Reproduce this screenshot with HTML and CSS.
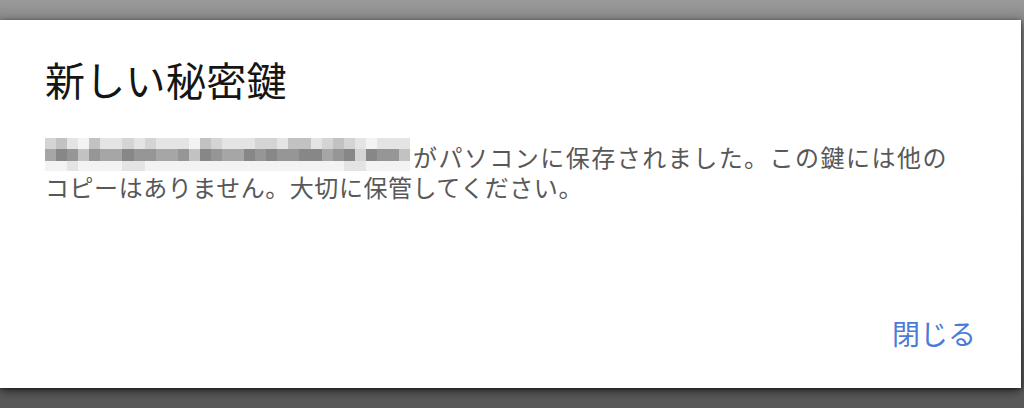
FILE: index.html
```html
<!DOCTYPE html>
<html lang="ja">
<head>
<meta charset="utf-8">
<title>新しい秘密鍵</title>
<link rel="stylesheet" href="styles.css">
</head>
<body>
<div class="dialog">
  <h1 class="title">新しい秘密鍵</h1>
  <p class="message"><span class="redacted" aria-label="(非表示)"><span class="row r1"><i class="g3"></i><i class="g4"></i><i class="g2"></i><i class="g1"></i><i class="g4"></i><i class="g2"></i><i class="g2"></i><i class="g3"></i><i class="g2"></i><i class="g3"></i><i class="g2"></i><i class="g2"></i><i class="g2"></i><i class="g1"></i><i class="g4"></i><i class="g3"></i><i class="g2"></i><i class="g2"></i><i class="g2"></i><i class="g3"></i><i class="g3"></i><i class="g2"></i><i class="g4"></i><i class="g4"></i><i class="g2"></i><i class="g3"></i><i class="g4"></i><i class="g3"></i><i class="g2"></i><i class="g1"></i><i class="g2"></i><i class="g2"></i><i class="g2"></i></span><span class="row r2"><i class="g5"></i><i class="g7"></i><i class="g6"></i><i class="g4"></i><i class="g6"></i><i class="g5"></i><i class="g5"></i><i class="g7"></i><i class="g6"></i><i class="g6"></i><i class="g5"></i><i class="g5"></i><i class="g6"></i><i class="g4"></i><i class="g7"></i><i class="g6"></i><i class="g5"></i><i class="g5"></i><i class="g7"></i><i class="g6"></i><i class="g7"></i><i class="g6"></i><i class="g6"></i><i class="g7"></i><i class="g7"></i><i class="g5"></i><i class="g6"></i><i class="g7"></i><i class="g3"></i><i class="g7"></i><i class="g6"></i><i class="g6"></i><i class="g4"></i></span><span class="row r3"><i class="g1"></i><i class="g1"></i><i class="g2"></i><i class="g1"></i><i class="g1"></i><i class="g1"></i><i class="g1"></i><i class="g2"></i><i class="g2"></i><i class="g1"></i><i class="g1"></i><i class="g1"></i><i class="g1"></i><i class="g1"></i><i class="g1"></i><i class="g1"></i><i class="g1"></i><i class="g1"></i><i class="g1"></i><i class="g1"></i><i class="g1"></i><i class="g1"></i><i class="g1"></i><i class="g1"></i><i class="g1"></i><i class="g1"></i><i class="g1"></i><i class="g2"></i><i class="g2"></i><i class="g1"></i><i class="g1"></i><i class="g1"></i><i class="g1"></i></span></span>がパソコンに保存されました。この鍵には他の<span class="nowrap">コピーはありません。</span>大切に保管してください。</p>
  <div class="actions">
    <button class="btn" type="button">閉じる</button>
  </div>
</div>
</body>
</html>
```

FILE: styles.css
```css
html, body {
  margin: 0;
  padding: 0;
}
body {
  width: 1024px;
  height: 408px;
  overflow: hidden;
  background: linear-gradient(#9a9a9a 0px, #8a8a8a 20px, #6a6a6a 300px, #585858 408px);
  font-family: "Noto Sans CJK JP", "Noto Sans", sans-serif;
}
.dialog {
  box-sizing: border-box;
  margin-top: 20px;
  width: 1021px;
  height: 368px;
  background: #fff;
  box-shadow: 0 3px 10px rgba(0, 0, 0, 0.6), 0 1px 3px rgba(0, 0, 0, 0.45);
  display: flex;
  flex-direction: column;
  padding: 35px 45px 37px 45px;
}
.title {
  margin: 0;
  font-size: 40px;
  line-height: 48px;
  font-weight: 400;
  letter-spacing: 0.3px;
  color: #151515;
}
.message {
  margin: 39px 0 0 0;
  width: 902px;
  font-size: 24px;
  line-height: 30px;
  letter-spacing: 0.55px;
  color: #585858;
  text-align: justify;
}
.nowrap {
  white-space: nowrap;
}
.redacted {
  display: inline-block;
  width: 365px;
  height: 33px;
  margin: -4px 2px -4px 0;
  vertical-align: -4px;
}
.row {
  display: flex;
}
.r1 { height: 11px; }
.r2 { height: 12px; }
.r3 { height: 10px; }
.row i {
  display: block;
  flex: 1 1 0;
}
.g1 { background: #f3f3f3; }
.g2 { background: #e4e4e4; }
.g3 { background: #d4d4d4; }
.g4 { background: #c2c2c2; }
.g5 { background: #a6a6a6; }
.g6 { background: #969696; }
.g7 { background: #878787; }
.actions {
  margin-top: auto;
  display: flex;
  justify-content: flex-end;
}
.btn {
  border: 0;
  background: transparent;
  padding: 0;
  font-family: inherit;
  font-size: 28px;
  line-height: 36px;
  color: #4c7bd6;
  cursor: pointer;
}
```
